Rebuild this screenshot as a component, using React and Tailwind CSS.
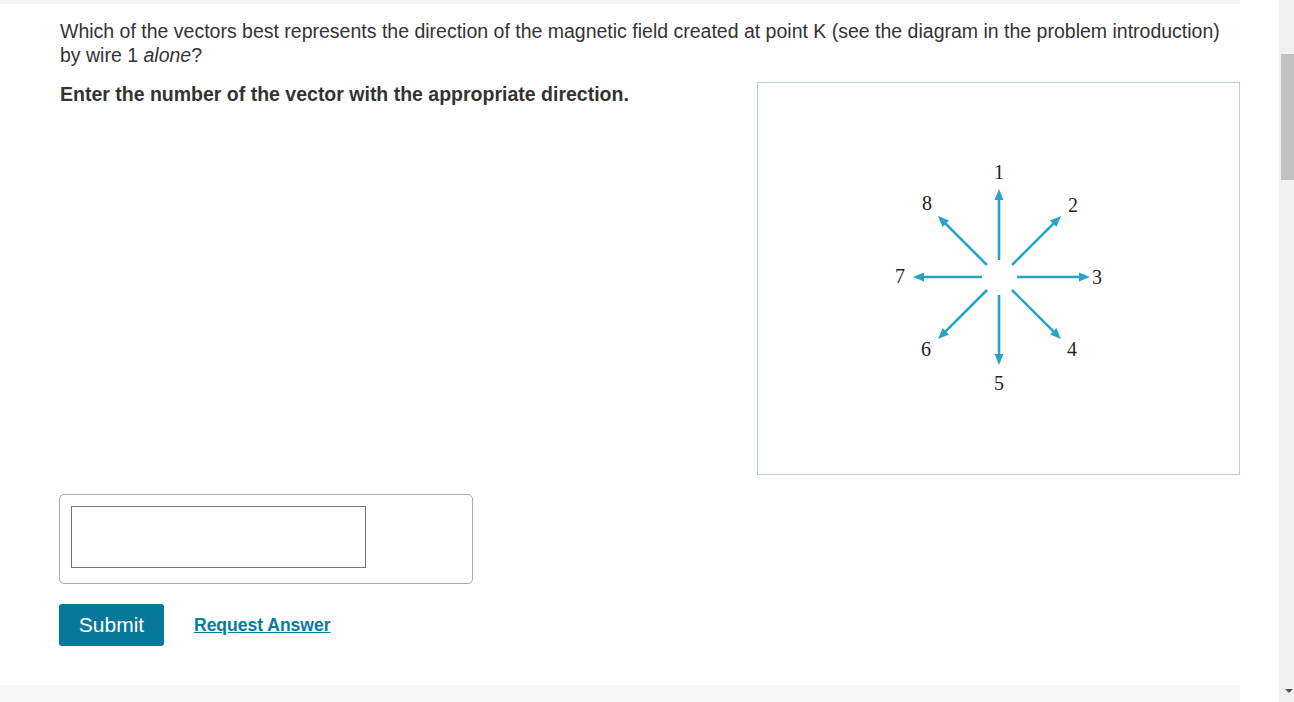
import React from "react";

const ARROW = "#27a4c8";

function Arrow({ x1, y1, x2, y2 }) {
  const dx = x2 - x1;
  const dy = y2 - y1;
  const len = Math.hypot(dx, dy);
  const ux = dx / len;
  const uy = dy / len;
  const hl = 11;
  const hw = 4.5;
  const bx = x2 - ux * hl;
  const by = y2 - uy * hl;
  const px = -uy;
  const py = ux;
  const pts = `${x2},${y2} ${bx + px * hw},${by + py * hw} ${bx - px * hw},${by - py * hw}`;
  return (
    <g>
      <line x1={x1} y1={y1} x2={bx + ux * 1} y2={by + uy * 1} stroke={ARROW} strokeWidth="2.6" />
      <polygon points={pts} fill={ARROW} />
    </g>
  );
}

function Diagram() {
  const arrows = [
    [999, 260, 999, 189],
    [999, 295, 999, 365],
    [1017, 277, 1090, 277],
    [982, 277, 913, 277],
    [1012, 265, 1061, 216],
    [987, 265, 938, 216],
    [987, 290, 938, 339],
    [1012, 290, 1061, 339],
  ];
  const labels = [
    ["1", 999, 172],
    ["2", 1073, 205],
    ["3", 1097, 277],
    ["4", 1072, 349],
    ["5", 999, 383],
    ["6", 926, 349],
    ["7", 900, 276],
    ["8", 927, 203],
  ];
  return (
    <svg width="481" height="391" viewBox="758 83 481 391" className="block">
      {arrows.map((a, i) => (
        <Arrow key={i} x1={a[0]} y1={a[1]} x2={a[2]} y2={a[3]} />
      ))}
      {labels.map(([t, x, y]) => (
        <text
          key={t}
          x={x}
          y={y}
          textAnchor="middle"
          dominantBaseline="central"
          fontFamily="'Liberation Serif', serif"
          fontSize="20"
          fill="#231f20"
        >
          {t}
        </text>
      ))}
    </svg>
  );
}

export default function App() {
  return (
    <div className="flex h-[702px] w-[1294px] overflow-hidden bg-white font-['Liberation_Sans',Arial,sans-serif] text-[#333]">
      <div className="flex w-[1240px] flex-col">
        <div className="h-[4px] bg-[#f5f5f5]" />
        <div className="flex flex-1 flex-col pl-[60px] pt-[15px]">
          <p className="text-[19.5px] leading-[24px]">
            Which of the vectors best represents the direction of the magnetic field created at point K (see the diagram in the problem introduction) by wire 1 <em>alone</em>?
          </p>
          <div className="mt-[15px] flex justify-between">
            <p className="text-[19.5px] font-bold leading-[24px]">
              Enter the number of the vector with the appropriate direction.
            </p>
            <div className="h-[393px] w-[483px] border border-[#b9cdd9]">
              <Diagram />
            </div>
          </div>
          <div className="-ml-px mt-[19px] w-[414px] rounded-[5px] border border-[#aaaaaa] pb-[15px] pl-[11px] pt-[11px]">
            <div className="h-[62px] w-[295px] border border-[#767676] bg-white" />
          </div>
          <div className="-ml-px mt-[20px] flex items-center gap-[30px]">
            <button className="h-[42px] w-[105px] rounded-[3px] bg-[#05789a] text-[21px] text-white">
              Submit
            </button>
            <a href="#" className="text-[17.5px] font-bold text-[#047a9c] underline">
              Request Answer
            </a>
          </div>
        </div>
        <div className="h-[17px] bg-[#f7f7f7]" />
      </div>
      <div className="flex-1" />
      <div className="relative w-[15px] bg-[#f1f1f1]">
        <div className="absolute left-[2px] top-[54px] h-[126px] w-[13px] bg-[#c1c1c1]" />
        <div className="absolute bottom-[9px] left-[6px] h-0 w-0 border-l-[4px] border-r-[4px] border-t-[4px] border-l-transparent border-r-transparent border-t-[#505050]" />
      </div>
    </div>
  );
}
